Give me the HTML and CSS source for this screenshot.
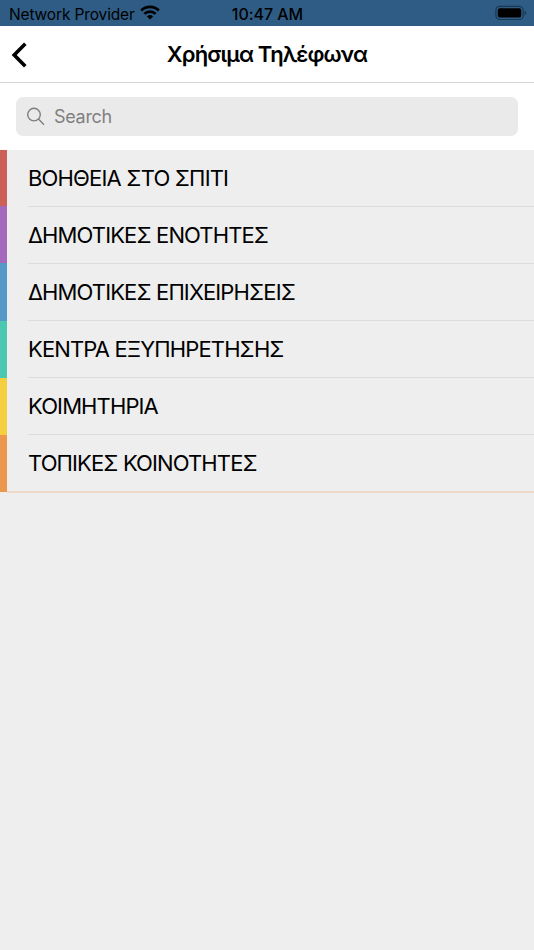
FILE: index.html
```html
<!DOCTYPE html>
<html lang="el">
<head>
<meta charset="utf-8">
<title>Χρήσιμα Τηλέφωνα</title>
<link rel="stylesheet" href="styles.css">
</head>
<body>
<div class="status">
  <div class="carrier"><span>Network Provider</span>
    <svg class="wifi" width="20" height="15" viewBox="0 0 20 15"><g fill="none" stroke="#000" stroke-width="2.7"><path d="M1.2 5.5A12.7 12.7 0 0 1 18.8 5.5"/><path d="M4.4 8.9A8 8 0 0 1 15.6 8.9"/></g><path d="M6.9 11.4A4.5 4.5 0 0 1 13.1 11.4L10 14.5Z"/></svg>
  </div>
  <span class="time">10:47 AM</span>
  <svg class="battery" width="32" height="16" viewBox="0 0 32 16"><rect x=".9" y="1.3" width="27.2" height="13.2" rx="3.8" fill="none" stroke="#1b3852" stroke-width="1.2"/><rect x="2.8" y="3.2" width="23.4" height="9.4" rx="2.2"/><path d="M29.6 5.8Q31.2 6.3 31.2 8T29.6 10.2Z" fill="#1b3852"/></svg>
</div>
<header class="navbar">
  <svg class="back" width="18" height="28" viewBox="0 0 18 28"><path d="M15.3 2.8L4.2 14L15.3 25.2" fill="none" stroke="#000" stroke-width="3.6"/></svg>
  <h1>Χρήσιμα Τηλέφωνα</h1>
</header>
<div class="searchbar"><div class="field">
  <svg width="19" height="20" viewBox="0 0 19 20" fill="none" stroke="#7e7e7e" stroke-width="1.4"><circle cx="7" cy="7.6" r="6.3"/><path d="M11.5 12.1L17 17.7"/></svg>
  <span>Search</span>
</div></div>
<ul class="list">
  <li class="red"><span>ΒΟΗΘΕΙΑ ΣΤΟ ΣΠΙΤΙ</span></li>
  <li class="purple"><span>ΔΗΜΟΤΙΚΕΣ ΕΝΟΤΗΤΕΣ</span></li>
  <li class="blue"><span>ΔΗΜΟΤΙΚΕΣ ΕΠΙΧΕΙΡΗΣΕΙΣ</span></li>
  <li class="green"><span>ΚΕΝΤΡΑ ΕΞΥΠΗΡΕΤΗΣΗΣ</span></li>
  <li class="yellow"><span>ΚΟΙΜΗΤΗΡΙΑ</span></li>
  <li class="orange"><span>ΤΟΠΙΚΕΣ ΚΟΙΝΟΤΗΤΕΣ</span></li>
</ul>
</body>
</html>
```
FILE: styles.css
```css
* { box-sizing: border-box; }
body { margin: 0; min-height: 950px; background: #eee; color: #000; font-family: Inter, "Liberation Sans", sans-serif; }
.status { height: 26px; background: #2e5c85; display: grid; grid-template-columns: 1fr auto 1fr; align-items: center; padding: 2px 8px 0 9px; font-size: 15.5px; }
.carrier { display: flex; align-items: center; gap: 5px; letter-spacing: -0.14px; white-space: nowrap; }
.wifi { margin-top: -3px; }
.time { font-size: 16px; font-weight: 500; letter-spacing: -0.05px; }
.battery { justify-self: end; margin: -3px -1px 0 0; }
.navbar { height: 57px; background: #fff; border-bottom: 1px solid #d8d8d8; display: grid; grid-template-columns: 40px 1fr 40px; align-items: center; }
.back { margin: 1px 0 0 10px; }
h1 { margin: 0; font-size: 22px; font-weight: 600; text-align: center; letter-spacing: -0.86px; white-space: nowrap; }
.searchbar { height: 67px; background: #fff; padding: 14px 16px; }
.field { height: 39px; border-radius: 7px; background: #eaeaea; display: flex; align-items: center; gap: 8px; padding-left: 11px; color: #808080; font-size: 18px; letter-spacing: -0.3px; }
.list { list-style: none; margin: 0; padding: 0; }
li { height: 57px; display: flex; padding-left: 21px; border-left: 7px solid; }
li span { flex: 1; height: 57px; color: #000; font-size: 22px; line-height: 56px; letter-spacing: -0.88px; border-bottom: 1px solid #dcdcdc; white-space: nowrap; }
.red { border-color: #cc6057; height: 56px; }
.red span { letter-spacing: -0.82px; }
.purple { border-color: #a468bd; }
.blue { border-color: #5599c8; height: 58px; }
.purple span, .blue span { height: 58px; line-height: 58px; }
.green { border-color: #4bc8b0; }
.yellow { border-color: #f4d03f; }
.orange { border-color: #eb984e; padding-left: 0; }
.orange span { height: 58px; padding-left: 21px; border-bottom: 2px solid #efdac9; }
```
